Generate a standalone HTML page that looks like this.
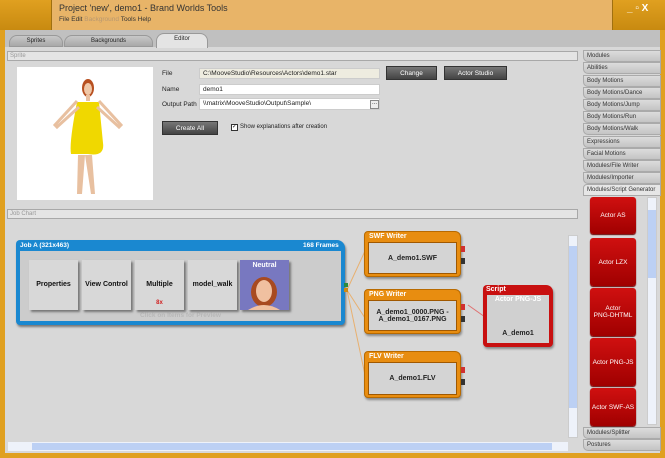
<!DOCTYPE html>
<html><head><style>
*{margin:0;padding:0;box-sizing:border-box}
body{width:665px;height:458px;position:relative;overflow:hidden;background:#e0a020;font-family:"Liberation Sans",sans-serif;font-size:7px;color:#222}
.a{position:absolute}
.bar{position:absolute;background:#e4e4e4;border:1px solid #a8a8a8;color:#999;font-size:6px;padding-left:2px;line-height:8px}
.fld{position:absolute;background:#fff;border:1px solid #ccc;font-size:6.5px;padding-left:3px;line-height:10px}
.btn{position:absolute;background:linear-gradient(#777,#444);color:#fff;border:1px solid #333;font-size:6.5px;text-align:center;line-height:13px}
.li{position:absolute;left:583px;width:78px;height:12px;background:linear-gradient(#dcdcdc,#c4c4c4);border:1px solid #aaa;border-radius:0 0 0 5px;font-size:6px;line-height:11px;padding-left:3px;color:#333;white-space:nowrap;overflow:hidden}
.tile{position:absolute;top:260px;width:49px;height:50px;background:#d8d8d8;box-shadow:2px 2px 2px #777;font-weight:bold;font-size:7px;text-align:center;line-height:50px;color:#111}
.wr{position:absolute;width:97px;background:#e88d10;border:1px solid #b86a00;border-radius:4px 6px 4px 4px;box-shadow:1px 2px 2px #888}
.wr .h{color:#fff;font-weight:bold;font-size:7px;padding:1px 4px;height:10px}
.wr .b{margin:0 3px 3px 3px;background:#d4d4d4;border:1px solid #a05800;font-weight:bold;font-size:7px;display:flex;align-items:center;justify-content:center;text-align:center}
.red{position:absolute;left:590px;width:46px;height:48px;background:linear-gradient(#d01010,#a00000);border-radius:3px;color:#fff;font-size:6.5px;display:flex;align-items:center;justify-content:center;text-align:center;box-shadow:0 1px 1px #600}
</style></head><body>
<div class="a" style="left:0;top:0;width:665px;height:30px;background:#e8b468"></div>
<div class="a" style="left:0;top:0;width:52px;height:30px;background:linear-gradient(#e0a020,#c88a10);border-right:1px solid #a07010"></div>
<div class="a" style="left:612px;top:0;width:53px;height:30px;background:linear-gradient(#e0a020,#c88a10);border-left:1px solid #a07010;color:#fff;font-size:10px;font-weight:bold;padding:3px 0 0 14px">_ ▫ X</div>
<div class="a" style="left:59px;top:3px;font-size:9px;color:#333">Project 'new', demo1 - Brand Worlds Tools</div>
<div class="a" style="left:59px;top:16px;font-size:6.5px;color:#333">File Edit <span style="color:#b89870">Background</span> Tools Help</div>
<div class="a" style="left:5px;top:30px;width:655px;height:423px;background:#d8d8d8"></div>
<div class="a" style="left:5px;top:30px;width:655px;height:17px;background:#c0c0c0"></div>
<div class="a" style="left:9px;top:35px;width:54px;height:12px;background:linear-gradient(#c8c8c8,#a8a8a8);border-radius:8px 8px 0 0;border:1px solid #999;text-align:center;font-size:6px;line-height:11px">Sprites</div>
<div class="a" style="left:64px;top:35px;width:89px;height:12px;background:linear-gradient(#c8c8c8,#a8a8a8);border-radius:8px 8px 0 0;border:1px solid #999;text-align:center;font-size:6px;line-height:11px">Backgrounds</div>
<div class="a" style="left:156px;top:33px;width:52px;height:15px;background:#e4e4e4;border-radius:8px 8px 0 0;border:1px solid #999;border-bottom:none;text-align:center;font-size:6px;line-height:11px">Editor</div>
<div class="bar" style="left:7px;top:51px;width:571px;height:10px">Sprite</div>
<div class="a" style="left:17px;top:67px;width:136px;height:133px;background:#fff"></div>
<svg class="a" style="left:17px;top:67px" width="136" height="133">
<path d="M68 88 L75 88 L78 127 L74 127 Z M61 88 L68 88 L65 127 L60 127 Z" fill="#e8c0a0"/>
<path d="M60 35 L82 35 L86 76 Q88 90 71 87 L54 87 Q52 76 60 35 Z" fill="#f0d800"/>
<path d="M60 34 L38 58 L40 60 L62 40 M82 34 L104 58 L102 60 L80 40" stroke="#e8c0a0" stroke-width="3" fill="none"/>
<ellipse cx="71" cy="21" rx="6" ry="9" fill="#b85020"/><ellipse cx="71" cy="22" rx="4" ry="6" fill="#f0c8a8"/>
<rect x="69" y="28" width="4" height="6" fill="#eac0a0"/>
</svg>
<div class="a" style="left:162px;top:70px;font-size:6.5px">File</div>
<div class="a" style="left:162px;top:86px;font-size:6.5px">Name</div>
<div class="a" style="left:162px;top:101px;font-size:6.5px">Output Path</div>
<div class="fld" style="left:199px;top:68px;width:181px;height:11px;background:#eeece0">C:\MooveStudio\Resources\Actors\demo1.star</div>
<div class="fld" style="left:199px;top:84px;width:181px;height:11px">demo1</div>
<div class="fld" style="left:199px;top:98px;width:181px;height:12px">\\matrix\MooveStudio\Output\Sample\</div>
<div class="a" style="left:370px;top:100px;width:9px;height:9px;border:1px solid #888;background:#eee;font-size:6px;line-height:5px;text-align:center">...</div>
<div class="btn" style="left:386px;top:66px;width:51px;height:14px">Change</div>
<div class="btn" style="left:444px;top:66px;width:63px;height:14px">Actor Studio</div>
<div class="btn" style="left:162px;top:121px;width:56px;height:14px">Create All</div>
<div class="a" style="left:231px;top:124px;width:7px;height:7px;border:1px solid #333;background:#fff;font-size:6px;line-height:5px">✓</div>
<div class="a" style="left:240px;top:124px;font-size:6px">Show explanations after creation</div>

<div class="li" style="top:50px">Modules</div>
<div class="li" style="top:62px">Abilities</div>
<div class="li" style="top:75px">Body Motions</div>
<div class="li" style="top:87px">Body Motions/Dance</div>
<div class="li" style="top:99px">Body Motions/Jump</div>
<div class="li" style="top:111px">Body Motions/Run</div>
<div class="li" style="top:123px">Body Motions/Walk</div>
<div class="li" style="top:136px">Expressions</div>
<div class="li" style="top:148px">Facial Motions</div>
<div class="li" style="top:160px">Modules/File Writer</div>
<div class="li" style="top:172px">Modules/Importer</div>
<div class="li" style="top:184px;background:#e6e6e6;border-radius:4px 0 0 0">Modules/Script Generator</div>
<div class="a" style="left:647px;top:197px;width:10px;height:228px;background:#eef2fa;border:1px solid #ccc"></div>
<div class="a" style="left:648px;top:210px;width:8px;height:68px;background:#bcd0f4"></div>
<div class="red" style="top:197px;height:37px">Actor AS</div>
<div class="red" style="top:238px">Actor LZX</div>
<div class="red" style="top:288px">Actor<br>PNG-DHTML</div>
<div class="red" style="top:338px">Actor PNG-JS</div>
<div class="red" style="top:388px;height:38px">Actor SWF-AS</div>
<div class="li" style="top:427px">Modules/Splitter</div>
<div class="li" style="top:439px">Postures</div>

<div class="bar" style="left:7px;top:209px;width:571px;height:10px">Job Chart</div>
<div class="a" style="left:568px;top:235px;width:10px;height:203px;background:#eef2fa;border:1px solid #ccc"></div>
<div class="a" style="left:569px;top:246px;width:8px;height:162px;background:#bcd0f4"></div>
<div class="a" style="left:8px;top:442px;width:560px;height:9px;background:#eef2fa"></div>
<div class="a" style="left:32px;top:443px;width:520px;height:7px;background:#bcd0f4"></div>
<svg class="a" style="left:0;top:0" width="665" height="458">
<path d="M347 290 L365 251 M347 290 L365 318 M347 290 L365 375" stroke="#e8b070" stroke-width="1" fill="none"/>
<path d="M468 305 L485 317" stroke="#e07070" stroke-width="1"/>
</svg>
<div class="a" style="left:16px;top:240px;width:329px;height:85px;background:#1a88d0;border-radius:4px 8px 4px 4px;box-shadow:1px 2px 2px #777"></div>
<div class="a" style="left:20px;top:242px;color:#fff;font-weight:bold;font-size:6.5px">Job A (321x463)</div>
<div class="a" style="left:303px;top:242px;color:#fff;font-weight:bold;font-size:6.5px">168 Frames</div>
<div class="a" style="left:20px;top:251px;width:321px;height:70px;background:#cccccc"></div>
<div class="a" style="left:140px;top:312px;color:#b8b8b8;font-weight:bold;font-size:6.5px">Click on Items for Preview</div>
<div class="a" style="left:344px;top:283px;width:4px;height:4px;background:#2a8a40"></div>
<div class="a" style="left:344px;top:288px;width:4px;height:4px;background:#d08a10"></div>
<div class="tile" style="left:29px">Properties</div>
<div class="tile" style="left:82px">View Control</div>
<div class="tile" style="left:135px">Multiple<div class="a" style="left:0;top:18px;width:49px;color:#d02020;font-size:6px">8x</div></div>
<div class="tile" style="left:188px">model_walk</div>
<div class="tile" style="left:240px;background:#7878c0;color:#fff;line-height:12px">Neutral
<svg width="49" height="38" style="display:block"><ellipse cx="24" cy="20" rx="13" ry="15" fill="#a84a20"/><ellipse cx="24" cy="19" rx="8" ry="11" fill="#f0c0a0"/><path d="M8 38 Q24 28 40 38Z" fill="#f0c0a0"/></svg></div>
<div class="wr" style="left:364px;top:231px;height:46px"><div class="h">SWF Writer</div><div class="b" style="height:32px">A_demo1.SWF</div></div>
<div class="wr" style="left:364px;top:289px;height:45px"><div class="h">PNG Writer</div><div class="b" style="height:31px">A_demo1_0000.PNG -<br>A_demo1_0167.PNG</div></div>
<div class="wr" style="left:364px;top:351px;height:47px"><div class="h">FLV Writer</div><div class="b" style="height:33px">A_demo1.FLV</div></div>
<div class="a" style="left:461px;top:246px;width:4px;height:6px;background:#d03030"></div><div class="a" style="left:461px;top:258px;width:4px;height:6px;background:#333"></div>
<div class="a" style="left:461px;top:304px;width:4px;height:6px;background:#d03030"></div><div class="a" style="left:461px;top:316px;width:4px;height:6px;background:#333"></div>
<div class="a" style="left:461px;top:367px;width:4px;height:6px;background:#d03030"></div><div class="a" style="left:461px;top:379px;width:4px;height:6px;background:#333"></div>
<div class="a" style="left:483px;top:285px;width:70px;height:62px;background:#c81010;border-radius:4px 7px 4px 4px;box-shadow:1px 2px 2px #888"></div>
<div class="a" style="left:486px;top:286px;color:#fff;font-weight:bold;font-size:7px">Script</div>
<div class="a" style="left:487px;top:295px;width:62px;height:48px;background:#d0d0d0;text-align:center;font-size:7px;font-weight:bold"><div style="color:#fff;margin-top:1px">Actor PNG-JS</div><div style="margin-top:27px">A_demo1</div></div>
</body></html>
